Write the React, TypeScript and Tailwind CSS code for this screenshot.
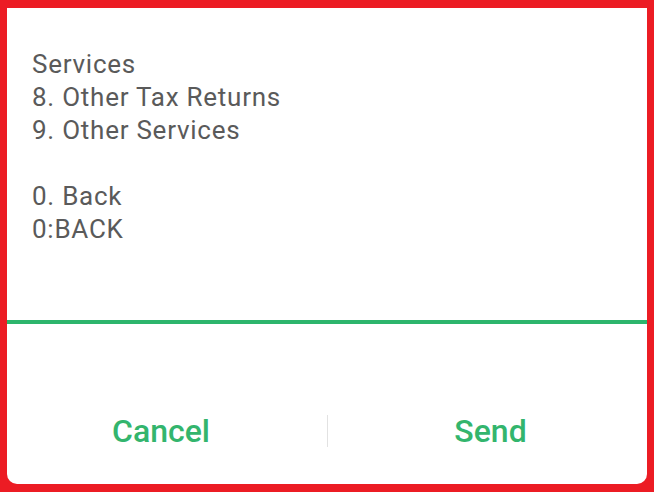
import React from "react";

export default function App() {
  const lines = ["Services", "8. Other Tax Returns", "9. Other Services", "\u00a0", "0. Back", "0:BACK"];
  return (
    <div className="w-[654px] h-[492px] bg-[#ec1c24] pt-[8px] pb-[8px] pl-[7px] pr-[7px]" style={{ fontFamily: "Roboto, 'Noto Sans', sans-serif" }}>
      <div className="w-full h-full bg-white rounded-b-[10px] flex flex-col overflow-hidden">
        <div className="h-[312px] pl-[25px] pt-[40px] text-[26px] leading-[33px] text-[#5a5a5a] tracking-[0.75px]">
          {lines.map((l, i) => (
            <div key={i}>{l}</div>
          ))}
        </div>
        <div className="h-[4px] bg-[#2db56c]" />
        <div className="flex-1 pt-[75px]">
          <div className="flex items-center h-[64px]">
            <div className="w-[320px] flex justify-center text-[32px] font-medium text-[#33b56d] pr-[12px]">Cancel</div>
            <div className="w-[1px] h-[32px] bg-[#e2e2e2]" />
            <div className="flex-1 flex justify-center text-[32px] font-medium text-[#33b56d] pl-[6px]">Send</div>
          </div>
        </div>
      </div>
    </div>
  );
}
